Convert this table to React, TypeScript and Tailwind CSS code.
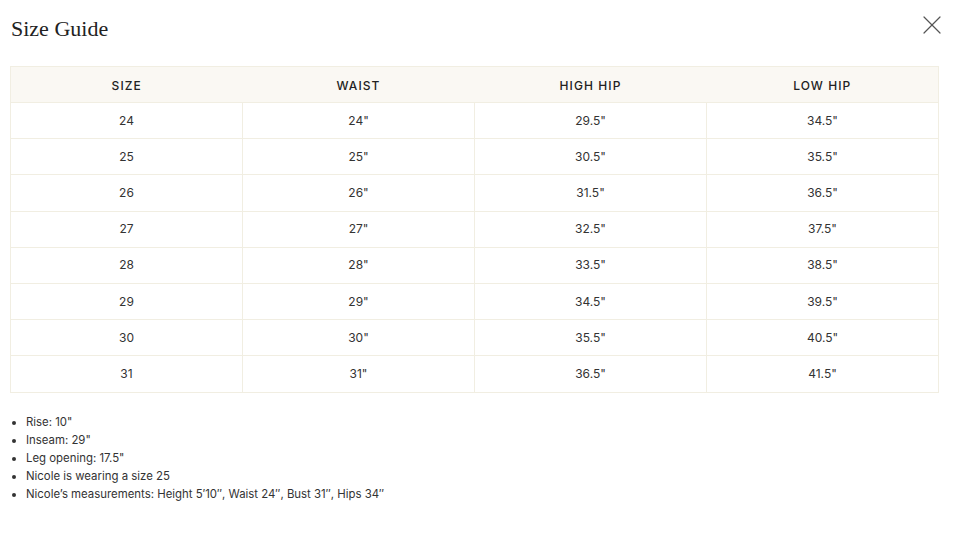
import { X } from 'lucide-react'

const rows = [
    ['24', '24"', '29.5"', '34.5"'],
    ['25', '25"', '30.5"', '35.5"'],
    ['26', '26"', '31.5"', '36.5"'],
    ['27', '27"', '32.5"', '37.5"'],
    ['28', '28"', '33.5"', '38.5"'],
    ['29', '29"', '34.5"', '39.5"'],
    ['30', '30"', '35.5"', '40.5"'],
    ['31', '31"', '36.5"', '41.5"'],
]

const notes = [
    'Rise: 10"',
    'Inseam: 29"',
    'Leg opening: 17.5"',
    'Nicole is wearing a size 25',
    'Nicole\u2019s measurements: Height 5\u203210\u2033, Waist 24\u2033, Bust 31\u2033, Hips 34\u2033',
]

export default function App() {
    return (
        <div className="w-[957px] h-[537px] bg-white relative font-['Inter',sans-serif] text-[#2b2b2b]">
            <div className="px-[10px] pt-[15px]">
                <h1 className="font-['Liberation_Serif',serif] text-[22px] leading-[28px] pl-px text-[#222]">Size Guide</h1>
                <button className="absolute right-[9px] top-[9px] text-[#555]" aria-label="Close">
                    <X size={32} strokeWidth={0.9} />
                </button>

                <table className="mt-[23px] w-[929px] border-collapse table-fixed border border-[#f1eee2]">
                    <thead>
                        <tr className="bg-[#faf8f3] h-[36px]">
                            {['SIZE', 'WAIST', 'HIGH HIP', 'LOW HIP'].map((h) => (
                                <th key={h} className="pt-[2px] text-[12px] font-medium tracking-[0.09em] text-[#222] text-center">
                                    {h}
                                </th>
                            ))}
                        </tr>
                    </thead>
                    <tbody>
                        {rows.map((r) => (
                            <tr key={r[0]} className="h-[36.2px]">
                                {r.map((c, i) => (
                                    <td key={i} className="border border-[#f1eee2] text-center text-[12px] text-[#333]">
                                        {c}
                                    </td>
                                ))}
                            </tr>
                        ))}
                    </tbody>
                </table>

                <ul className="mt-[20px] list-disc pl-[16px] text-[11.4px] leading-[18px] text-[#333]">
                    {notes.map((n) => (
                        <li key={n}>{n}</li>
                    ))}
                </ul>
            </div>
        </div>
    )
}
